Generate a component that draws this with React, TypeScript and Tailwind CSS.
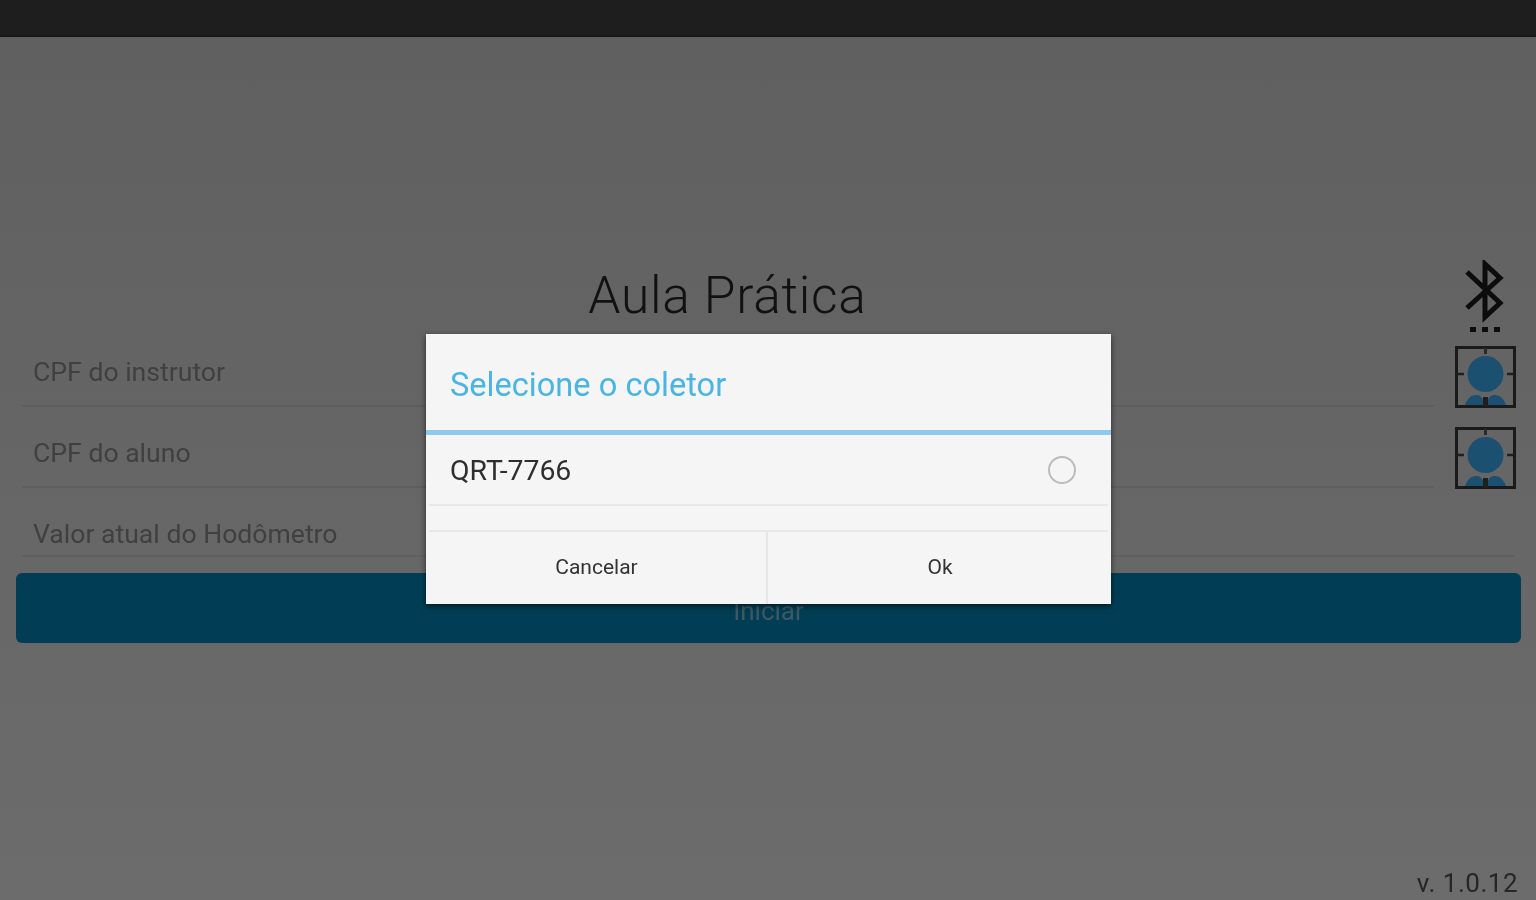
const SensorIcon = () => (
  <svg viewBox="0 0 62 62" className="w-[62px] h-[62px] shrink-0 blur-[0.4px]">
    <path d="M10 59c2-6 6-10 11-10 4 0 6 2 7 5v5zM51 59c-2-6-6-10-11-10-4 0-6 2-7 5v5z" fill="#1c5070" />
    <circle cx="30.500" cy="28" r="18" fill="#1c5070" />
    <rect x="1.500" y="1.500" width="58" height="59" fill="none" stroke="#1a1a1a" strokeWidth="3" />
    <path d="M30.500 2v6" stroke="#2a2a2a" strokeWidth="3" />
    <path d="M30.500 51v9" stroke="#1f1f1f" strokeWidth="5" />
    <path d="M2 28h7M52 28h7" stroke="#1f1f1f" strokeWidth="2.500" />
  </svg>
);

const BluetoothIcon = () => (
  <svg viewBox="0 0 62 75" className="w-[62px] h-[75px] blur-[0.4px]">
    <path
      d="M12 12l33 31-15 14V4l15 14-33 30"
      fill="none"
      stroke="#0c0c0c"
      strokeWidth="5"
      strokeLinejoin="miter"
    />
    <path d="M15 67h6v5h-6zM27 67h6v5h-6zM39 67h6v5h-6z" fill="#0c0c0c" />
  </svg>
);

const Field = ({ label }: { label: string }) => (
  <div className="flex h-[81px]">
    <div className="flex-1 pl-[22px] pr-[21px] pb-[20px]">
      <div className="h-[61px] border-b-2 border-[#5e5e5e] pl-[11px] pt-[8px] text-[26.600px] leading-[36px] text-[#404040] blur-[0.6px]">
        {label}
      </div>
    </div>
    <div className="mr-[19px]">
      <SensorIcon />
    </div>
  </div>
);

const App = () => {
  return (
    <div
      className="relative h-[900px] w-full overflow-hidden bg-gradient-to-b from-[#5f5f5f] to-[#6c6c6c] text-[#1f1f1f]"
      style={{ fontFamily: "Roboto, sans-serif" }}
    >
      {/* status bar */}
      <div className="h-[37px] bg-[#1e1e1e] border-b-2 border-[#191919]" />

      {/* form */}
      <div className="pt-[223px]">
        <div className="flex h-[86px]">
          <div className="flex-1 text-center text-[51.500px] font-light leading-[72px] tracking-[0.7px] text-[#111111] blur-[0.5px]">
            Aula Prática
          </div>
          <div className="mr-[19px]">
            <BluetoothIcon />
          </div>
        </div>

        <Field label="CPF do instrutor" />
        <Field label="CPF do aluno" />

        <div className="mx-[22px] -mt-[1px] mr-[21px] h-[50px] border-b-2 border-[#606060] pl-[11px] pt-[9px] text-[26.600px] leading-[36px] text-[#404040] blur-[0.6px]">
          Valor atual do Hodômetro
        </div>

        <div className="ml-[16px] mr-[15px] mt-[16px] flex h-[70px] items-center justify-center rounded-md bg-[#013e55]">
          <span className="pt-[6px] text-[26px] text-[#3f5963] blur-[0.7px]">Iniciar</span>
        </div>
      </div>

      <div className="absolute bottom-[-1px] right-[18px] text-[26px] leading-[36px] tracking-[0.5px] text-[#262626] blur-[0.6px]">
        v. 1.0.12
      </div>

      {/* dialog */}
      <div className="absolute left-[426px] top-[334px] flex h-[270px] w-[685px] flex-col bg-[#f5f5f5] shadow-[0_2px_6px_rgba(0,0,0,0.6)]">
        <div className="flex h-[96px] items-center pl-[24px] pt-[6px] text-[32.600px] text-[#4ab5e3] blur-[0.4px]">
          Selecione o coletor
        </div>
        <div className="h-[5px] bg-[#8ccbec]" />
        <div className="mx-[3px] flex h-[71px] items-center justify-between border-b-2 border-[#e8e8e8] pl-[21px] pr-[32px]">
          <span className="pt-[4px] text-[28.400px] text-[#2e2e2e] blur-[0.5px]">QRT-7766</span>
          <span className="h-[28px] w-[28px] rounded-full border-2 border-[#bcbcbc]" />
        </div>
        <div className="h-[24px]" />
        <div className="mx-[3px] flex flex-1 border-t-2 border-[#e8e8e8] text-[21px] text-[#333333]">
          <div className="flex w-[339px] items-center justify-center border-r-2 border-[#e6e6e6] pr-[2px] blur-[0.5px]">
            Cancelar
          </div>
          <div className="flex flex-1 items-center justify-center pl-[4px] blur-[0.5px]">Ok</div>
        </div>
      </div>
    </div>
  );
};

export default App;
